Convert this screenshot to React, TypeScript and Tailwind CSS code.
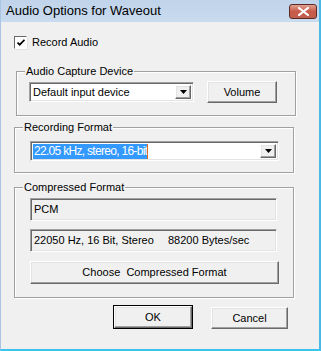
import React from 'react';

const sunken =
  'border border-t-[#a0a0a0] border-l-[#a0a0a0] border-b-white border-r-white shadow-[inset_1px_1px_0_#696969,inset_-1px_-1px_0_#e3e3e3]';
const raised =
  'border border-t-white border-l-white border-b-[#696969] border-r-[#696969] shadow-[inset_-1px_-1px_0_#a0a0a0,inset_1px_1px_0_#e3e3e3] bg-[#f0f0f0]';

function Group({ label, className, children }: { label: string; className: string; children: React.ReactNode }) {
  return (
    <div
      className={`relative border border-[#a0a0a0] shadow-[inset_1px_1px_0_white,1px_1px_0_white] ${className}`}
    >
      <span className="absolute left-[8px] top-[-8px] bg-[#f0f0f0] px-[1px] leading-[14px]">{label}</span>
      {children}
    </div>
  );
}

function DropArrow() {
  return (
    <div className={`flex h-full w-[16px] items-center justify-center ${raised}`}>
      <svg width="7" height="4" viewBox="0 0 7 4">
        <path d="M0 0h7L3.5 4z" fill="#000" />
      </svg>
    </div>
  );
}

export default function App() {
  return (
    <div
      className="flex h-[351px] w-[321px] flex-col border-b-2 border-l border-r-2 border-b-[#3cc4ee] border-l-[#a9c4e4] border-r-[#4ab8e6] bg-[#f0f0f0] text-[11px] text-black"
      style={{ fontFamily: '"Liberation Sans", Arial, sans-serif' }}
    >
      {/* title bar */}
      <div className="flex h-[22px] shrink-0 items-start bg-gradient-to-b from-[#bfd3ea] to-[#c9dbee] pl-[5px] pr-[2px]">
        <span className="mt-[3px] text-[13px] leading-[15px] text-black">Audio Options for Waveout</span>
        <div className="ml-auto mt-[4px] flex h-[15px] w-[28px] items-center justify-center rounded-[3px] border border-[#5c2a24] bg-gradient-to-b from-[#e0a193] via-[#c75a48] to-[#c06050]">
          <svg width="11" height="9" viewBox="0 0 11 9">
            <path d="M1 1l9 7M10 1L1 8" stroke="#fff" strokeWidth="2.2" strokeLinecap="square" />
          </svg>
        </div>
      </div>

      {/* record audio */}
      <div className="ml-[13px] mt-[14px] flex items-center gap-[5px]">
        <div className="flex h-[13px] w-[13px] items-center justify-center border border-t-[#696969] border-l-[#696969] border-b-white border-r-white bg-white shadow-[1px_1px_0_#e3e3e3]">
          <svg width="8" height="7" viewBox="0 0 8 7">
            <path d="M0.5 3.5l2.2 2.2L7.5 0.8" stroke="#000" strokeWidth="1.7" fill="none" />
          </svg>
        </div>
        <span className="leading-[13px]">Record Audio</span>
      </div>

      {/* audio capture device */}
      <Group label="Audio Capture Device" className="ml-[15px] mt-[22px] h-[45px] w-[280px]">
        <div className="ml-[12px] mt-[9px] flex items-start">
          <div className={`mt-[1px] flex h-[20px] w-[165px] bg-white p-[2px] ${sunken}`}>
            <span className="flex-1 pl-[1px] leading-[15px]">Default input device</span>
            <DropArrow />
          </div>
          <div className={`ml-[13px] flex h-[22px] w-[70px] items-center justify-center ${raised}`}>Volume</div>
        </div>
      </Group>

      {/* recording format */}
      <Group label="Recording Format" className="ml-[13px] mt-[11px] h-[46px] w-[280px]">
        <div className={`ml-[15px] mt-[13px] flex h-[20px] w-[249px] bg-white p-[2px] ${sunken}`}>
          <div className="flex flex-1 items-center">
            <span className="bg-[#3399ff] pl-[1px] text-[12px] leading-[15px] tracking-[-0.7px] text-white">
              22.05 kHz, stereo, 16-bit
            </span>
            <span className="h-[15px] w-[1px] bg-[#e07020]" />
          </div>
          <DropArrow />
        </div>
      </Group>

      {/* compressed format */}
      <Group label="Compressed Format" className="ml-[13px] mt-[14px] h-[111px] w-[280px]">
        <div className={`ml-[15px] mt-[10px] flex h-[23px] w-[247px] items-center px-[3px] ${sunken}`}>PCM</div>
        <div className={`ml-[15px] mt-[8px] flex h-[23px] w-[247px] items-center px-[3px] ${sunken}`}>
          <span className="w-[134px]">22050 Hz, 16 Bit, Stereo</span>
          <span>88200 Bytes/sec</span>
        </div>
        <div className={`ml-[15px] mt-[9px] flex h-[23px] w-[249px] items-center justify-center ${raised}`}>
          Choose&nbsp; Compressed Format
        </div>
      </Group>

      {/* buttons */}
      <div className="ml-[112px] mt-[7px] flex items-start">
        <div className="flex h-[24px] w-[80px] border border-black">
          <div className={`flex h-full w-full items-center justify-center ${raised}`}>OK</div>
        </div>
        <div className={`ml-[18px] mt-[2px] flex h-[22px] w-[77px] items-center justify-center ${raised}`}>Cancel</div>
      </div>
    </div>
  );
}
